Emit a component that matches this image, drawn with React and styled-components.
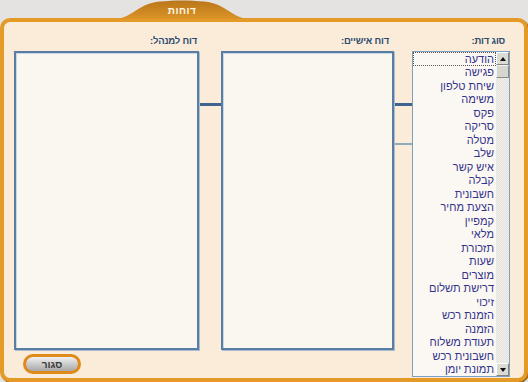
import React from 'react';
import styled, { createGlobalStyle } from 'styled-components';

const GlobalStyle = createGlobalStyle`
  html, body {
    margin: 0;
    padding: 0;
    background: #e4e3e1;
  }
  body {
    font-family: "Liberation Sans", "DejaVu Sans", sans-serif;
  }
`;

const reportTypes = [
  'הודעה', 'פגישה', 'שיחת טלפון', 'משימה', 'פקס', 'סריקה', 'מטלה', 'שלב',
  'איש קשר', 'קבלה', 'חשבונית', 'הצעת מחיר', 'קמפיין', 'מלאי', 'תזכורת',
  'שעות', 'מוצרים', 'דרישת תשלום', 'זיכוי', 'הזמנת רכש', 'הזמנה',
  'תעודת משלוח', 'חשבונית רכש', 'תמונת יומן',
];

function App() {
  return (
    <>
      <GlobalStyle />
      <Page>
        <TabRow>
          <Tab>
            <TabShape viewBox="0 0 136 19" preserveAspectRatio="none">
              <defs>
                <linearGradient id="tabg" x1="0" y1="0" x2="0" y2="1">
                  <stop offset="0" stopColor="#b9761a" />
                  <stop offset="1" stopColor="#db9426" />
                </linearGradient>
              </defs>
              <path d="M0,19 C18,19 22,4 46,1.5 C60,0 76,0 90,1.5 C114,4 118,19 136,19 Z" fill="url(#tabg)" />
            </TabShape>
            <TabTitle>דוחות</TabTitle>
          </Tab>
        </TabRow>
        <Frame>
          <Columns>
            <ListColumn>
              <Label $inset={5}>סוג דות:</Label>
              <ListBox>
                <Items>
                  {reportTypes.map((t, i) => (
                    <Item key={t} $focused={i === 0}>{t}</Item>
                  ))}
                </Items>
                <ScrollBar>
                  <ScrollButton>
                    <Arrow $up />
                  </ScrollButton>
                  <Thumb />
                  <Track />
                  <ScrollButton>
                    <Arrow />
                  </ScrollButton>
                </ScrollBar>
              </ListBox>
            </ListColumn>

            <Connector $width={18}>
              <ThickBar />
              <ThinBar />
            </Connector>

            <BoxColumn $width={173}>
              <Label $inset={5}>דוח אישיים:</Label>
              <ReportBox />
            </BoxColumn>

            <Connector $width={22}>
              <ThickBar />
            </Connector>

            <BoxColumn $width={185}>
              <Label $inset={2}>דוח למנהל:</Label>
              <ReportBox />
              <ButtonRow>
                <CloseButton>סגור</CloseButton>
              </ButtonRow>
            </BoxColumn>
          </Columns>
        </Frame>
      </Page>
    </>
  );
}

const Page = styled.div`
  width: 528px;
  height: 382px;
  display: flex;
  flex-direction: column;
  overflow: hidden;
`;

const TabRow = styled.div`
  height: 18px;
  display: flex;
  align-items: flex-end;
  padding-left: 114px;
`;

const Tab = styled.div`
  position: relative;
  width: 136px;
  height: 19px;
  margin-bottom: -1px;
  display: flex;
  align-items: center;
  justify-content: center;
`;

const TabShape = styled.svg`
  position: absolute;
  inset: 0;
  width: 100%;
  height: 100%;
`;

const TabTitle = styled.span`
  position: relative;
  color: #fff8e8;
  font-size: 10px;
  font-weight: bold;
  padding-top: 2px;
  letter-spacing: 0.5px;
`;

const Frame = styled.div`
  flex: 1;
  border: 4px solid #e39a26;
  border-radius: 10px;
  background: #faecd9;
  box-shadow: 1px 1px 0 #9a6414;
  box-sizing: border-box;
  padding: 0 14px 0 11px;
`;

const Columns = styled.div`
  direction: rtl;
  display: flex;
  align-items: flex-start;
`;

const Label = styled.div`
  height: 29px;
  box-sizing: border-box;
  padding: 12px ${(p) => p.$inset}px 0 0;
  font-size: 9.5px;
  font-weight: bold;
  line-height: 14px;
  color: #2d4b70;
  text-align: right;
  letter-spacing: -0.2px;
`;

const ListColumn = styled.div`
  width: 98px;
  flex-shrink: 0;
  display: flex;
  flex-direction: column;
`;

/* rtl grid: first area sits on the right */
const ListBox = styled.div`
  height: 326px;
  border: 1px solid #7f9fc2;
  background: #fbf8f4;
  box-sizing: border-box;
  display: grid;
  grid-template-columns: 13px 1fr;
  grid-template-areas: "bar list";
  overflow: hidden;
`;

const Items = styled.div`
  grid-area: list;
  min-width: 0;
  overflow: hidden;
`;

const Item = styled.div`
  height: 13.5px;
  box-sizing: border-box;
  display: flex;
  align-items: center;
  justify-content: flex-start;
  padding-right: 1px;
  font-size: 11px;
  color: #33338a;
  white-space: nowrap;
  border: 1px dotted ${(p) => (p.$focused ? '#555' : 'transparent')};
`;

const ScrollBar = styled.div`
  grid-area: bar;
  display: flex;
  flex-direction: column;
  background: #f2f0ec;
`;

const ScrollButton = styled.div`
  height: 13px;
  box-sizing: border-box;
  background: #dcdad5;
  border: 1px solid;
  border-color: #fff #848484 #848484 #fff;
  display: flex;
  align-items: center;
  justify-content: center;
`;

const Arrow = styled.div`
  width: 0;
  height: 0;
  border-left: 3.5px solid transparent;
  border-right: 3.5px solid transparent;
  ${(p) => (p.$up ? 'border-bottom: 4px solid #111;' : 'border-top: 4px solid #111;')}
`;

const Thumb = styled.div`
  height: 13px;
  box-sizing: border-box;
  background: #d8d6d1;
  border: 1px solid;
  border-color: #f4f4f4 #8a8a8a #8a8a8a #f4f4f4;
`;

const Track = styled.div`
  flex: 1;
  background-color: #f1efea;
  background-image: repeating-conic-gradient(#e2e0dc 0 25%, #f4f2ee 0 50%);
  background-size: 2px 2px;
`;

const Connector = styled.div`
  width: ${(p) => p.$width}px;
  flex-shrink: 0;
  padding-top: 81px;
  display: flex;
  flex-direction: column;
`;

const ThickBar = styled.div`
  height: 3px;
  background: #3d6590;
`;

const ThinBar = styled.div`
  height: 2px;
  margin-top: 37px;
  background: #8fa8c4;
`;

const BoxColumn = styled.div`
  width: ${(p) => p.$width}px;
  flex-shrink: 0;
  display: flex;
  flex-direction: column;
`;

const ReportBox = styled.div`
  height: 299px;
  box-sizing: border-box;
  border: 2px solid #5a7ea3;
  box-shadow: inset 1px 1px 0 #c9d6e4, 1px 1px 0 #a9bdd2;
  background: #faf6f0;
`;

const ButtonRow = styled.div`
  display: flex;
  justify-content: flex-end;
  padding: 4px 0 0 0;
  margin-left: 9px;
`;

const CloseButton = styled.button`
  width: 58px;
  height: 20px;
  box-sizing: border-box;
  border: 3px solid #e08a1a;
  border-radius: 10px;
  background: linear-gradient(#f2f2f2, #c4c4c4 60%, #a8a8a8);
  font-family: "Liberation Sans", "DejaVu Sans", sans-serif;
  font-size: 10px;
  font-weight: bold;
  color: #3a3a3a;
  padding: 0;
  cursor: pointer;
`;

export default App;
